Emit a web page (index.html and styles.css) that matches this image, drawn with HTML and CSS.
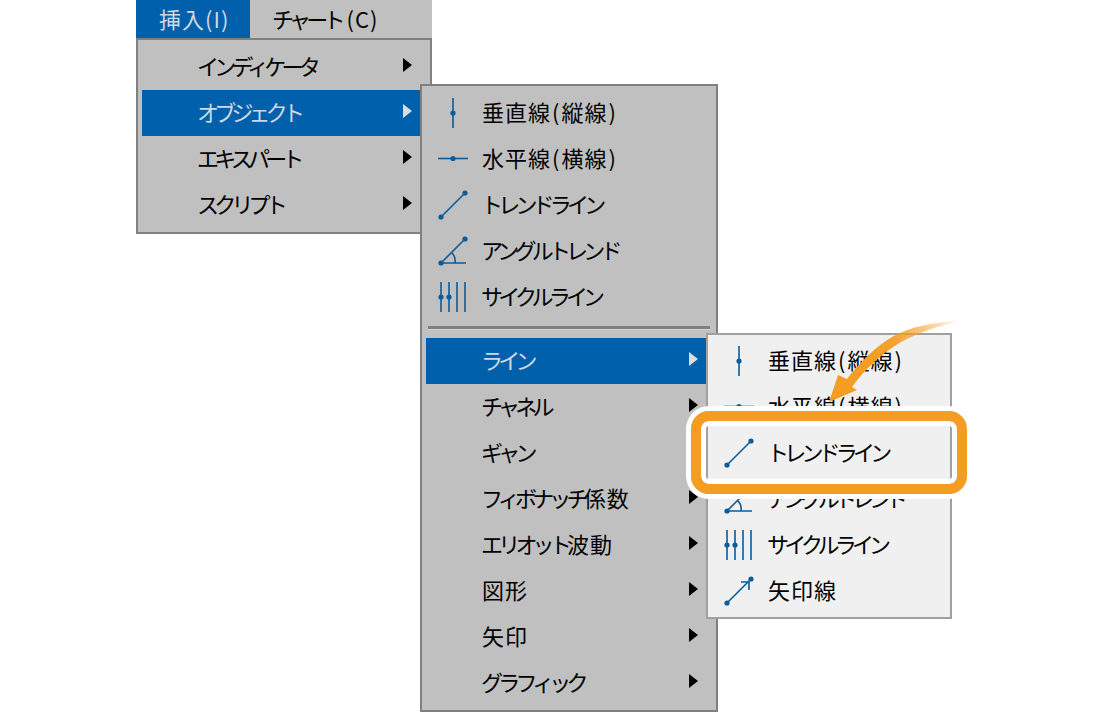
FILE: index.html
```html
<!DOCTYPE html>
<html lang="ja">
<head>
  <meta charset="UTF-8">
  <title>挿入メニュー</title>
  <link rel="stylesheet" href="styles.css">
</head>
<body>

  <!-- アイコン定義 -->
  <svg class="sprite" aria-hidden="true">
    <symbol id="i-vline" viewBox="0 0 30 30">
      <path d="M15 0V30" fill="none" stroke="currentColor" stroke-width="1.6"/>
      <circle cx="15" cy="15" r="2.6" fill="currentColor"/>
    </symbol>
    <symbol id="i-hline" viewBox="0 0 30 30">
      <path d="M0 14.5H30" fill="none" stroke="currentColor" stroke-width="1.6"/>
      <circle cx="15" cy="14.5" r="2.6" fill="currentColor"/>
    </symbol>
    <symbol id="i-trend" viewBox="0 0 30 30">
      <path d="M3 27L27 3" fill="none" stroke="currentColor" stroke-width="1.6"/>
      <circle cx="3" cy="27" r="2.6" fill="currentColor"/>
      <circle cx="27" cy="3" r="2.6" fill="currentColor"/>
    </symbol>
    <symbol id="i-angle" viewBox="0 0 30 30">
      <path d="M3 27L27 3M3 27H28M14 17Q18 21 17 27" fill="none" stroke="currentColor" stroke-width="1.6"/>
      <circle cx="3" cy="27" r="2.6" fill="currentColor"/>
      <circle cx="27" cy="3" r="2.6" fill="currentColor"/>
    </symbol>
    <symbol id="i-cycle" viewBox="0 0 30 30">
      <path d="M3 0V30M11 0V30M19 0V30M27 0V30" fill="none" stroke="currentColor" stroke-width="1.6"/>
      <circle cx="3" cy="15" r="2.6" fill="currentColor"/>
      <circle cx="11" cy="15" r="2.6" fill="currentColor"/>
    </symbol>
    <symbol id="i-arrow" viewBox="0 0 30 30">
      <path d="M3 27L27 3M17 6H25V14" fill="none" stroke="currentColor" stroke-width="1.6"/>
      <circle cx="3" cy="27" r="2.6" fill="currentColor"/>
      <circle cx="27" cy="3" r="2.6" fill="currentColor"/>
    </symbol>
  </svg>

  <!-- メニューバー -->
  <div class="menubar">
    <div class="menubar-item active"><span class="label">挿入<span class="paren">(</span>I<span class="paren">)</span></span></div>
    <div class="menubar-item"><span class="label"><span class="kana">チャート</span> <span class="paren">(</span>C<span class="paren">)</span></span></div>
  </div>

  <ul class="menu menu-root">
    <li><div class="row sub"><span class="icon"></span><span class="label"><span class="kana">インディケータ</span></span></div></li>
    <li>
      <div class="row sub on"><span class="icon"></span><span class="label"><span class="kana">オブジェクト</span></span></div>

      <!-- オブジェクト サブメニュー -->
      <ul class="menu menu-objects">
        <li><div class="row"><svg class="icon"><use href="#i-vline"/></svg><span class="label">垂直線<span class="paren">(</span>縦線<span class="paren">)</span></span></div></li>
        <li><div class="row"><svg class="icon"><use href="#i-hline"/></svg><span class="label">水平線<span class="paren">(</span>横線<span class="paren">)</span></span></div></li>
        <li><div class="row"><svg class="icon"><use href="#i-trend"/></svg><span class="label"><span class="kana">トレンドライン</span></span></div></li>
        <li><div class="row"><svg class="icon"><use href="#i-angle"/></svg><span class="label"><span class="kana">アングルトレンド</span></span></div></li>
        <li><div class="row"><svg class="icon"><use href="#i-cycle"/></svg><span class="label"><span class="kana">サイクルライン</span></span></div></li>
        <li class="separator"></li>
        <li>
          <div class="row sub on"><span class="icon"></span><span class="label"><span class="kana">ライン</span></span></div>

          <!-- ライン サブメニュー -->
          <ul class="menu menu-lines">
            <li><div class="row"><svg class="icon"><use href="#i-vline"/></svg><span class="label">垂直線<span class="paren">(</span>縦線<span class="paren">)</span></span></div></li>
            <li><div class="row"><svg class="icon"><use href="#i-hline"/></svg><span class="label">水平線<span class="paren">(</span>横線<span class="paren">)</span></span></div></li>
            <li><div class="row"><svg class="icon"><use href="#i-trend"/></svg><span class="label"><span class="kana">トレンドライン</span></span></div></li>
            <li><div class="row"><svg class="icon"><use href="#i-angle"/></svg><span class="label"><span class="kana">アングルトレンド</span></span></div></li>
            <li><div class="row"><svg class="icon"><use href="#i-cycle"/></svg><span class="label"><span class="kana">サイクルライン</span></span></div></li>
            <li><div class="row"><svg class="icon"><use href="#i-arrow"/></svg><span class="label">矢印線</span></div></li>
          </ul>
        </li>
        <li><div class="row sub"><span class="icon"></span><span class="label"><span class="kana">チャネル</span></span></div></li>
        <li><div class="row sub"><span class="icon"></span><span class="label"><span class="kana">ギャン</span></span></div></li>
        <li><div class="row sub"><span class="icon"></span><span class="label"><span class="kana">フィボナッチ</span>係数</span></div></li>
        <li><div class="row sub"><span class="icon"></span><span class="label"><span class="kana">エリオット</span>波動</span></div></li>
        <li><div class="row sub"><span class="icon"></span><span class="label">図形</span></div></li>
        <li><div class="row sub"><span class="icon"></span><span class="label">矢印</span></div></li>
        <li><div class="row sub"><span class="icon"></span><span class="label"><span class="kana">グラフィック</span></span></div></li>
      </ul>
    </li>
    <li><div class="row sub"><span class="icon"></span><span class="label"><span class="kana">エキスパート</span></span></div></li>
    <li><div class="row sub"><span class="icon"></span><span class="label"><span class="kana">スクリプト</span></span></div></li>
  </ul>

  <!-- 注釈: 枠と矢印 -->
  <div class="callout"></div>
  <svg class="callout-arrow" width="140" height="90" viewBox="0 0 140 90" aria-hidden="true">
    <defs>
      <linearGradient id="arrow-fade" gradientUnits="userSpaceOnUse" x1="136" y1="3" x2="40" y2="40">
        <stop offset="0" stop-color="#f59d23" stop-opacity="0"/>
        <stop offset="0.35" stop-color="#f59d23" stop-opacity="0.55"/>
        <stop offset="0.7" stop-color="#f59d23" stop-opacity="0.95"/>
        <stop offset="1" stop-color="#f59d23"/>
      </linearGradient>
    </defs>
    <path d="M136 3C108 4 84 9 67 19C50 29 35 44 22 61L13 57L4 84L32 72L27 69C38 53 57 35 76 24C93 15 112 8 136 3Z" fill="url(#arrow-fade)"/>
  </svg>

</body>
</html>
```

FILE: styles.css
```css
* {
  margin: 0;
  padding: 0;
  box-sizing: border-box;
}
body {
  position: relative;
  height: 712px;
  overflow: hidden;
  background: #fff;
  color: #000;
  font-family: "Noto Sans CJK JP", "Noto Sans", sans-serif;
  font-size: 22px;
}
ul {
  list-style: none;
}
.sprite {
  position: absolute;
  width: 0;
  height: 0;
}

/* メニューバー */
.menubar {
  display: flex;
  width: 296px;
  height: 38px;
  margin-left: 136px;
  background: #c0c0c0;
  line-height: 36px;
}
.menubar-item {
  padding: 0 0 0 24px;
  white-space: nowrap;
  letter-spacing: 0;
}
.menubar-item.active {
  width: 114px;
  background: #0060ab;
  color: #cfd8e2;
}
.menubar .paren {
  padding: 0;
}

/* メニュー共通 */
.menu {
  background: #c0c0c0;
  border: 2px solid #808080;
  padding: 4px;
}
.menu-root {
  width: 296px;
  margin-left: 136px;
}
.menu-objects {
  position: absolute;
  left: 278px;
  top: -6px;
  width: 298px;
  z-index: 2;
}
.menu-lines {
  position: absolute;
  left: 280px;
  top: -5px;
  width: 246px;
  padding: 3px 4px;
  background: #f0f0f0;
  border-color: #a0a0a0;
  z-index: 3;
}
.menu li {
  position: relative;
}
.row {
  display: flex;
  align-items: center;
  height: 46px;
  padding-left: 12px;
  gap: 15px;
  white-space: nowrap;
}
.row .label {
  margin-bottom: 4px;
}
.row.on {
  background: #0060ab;
  color: #cfd8e2;
}
.icon {
  flex: none;
  width: 30px;
  height: 30px;
  color: #0a5c9c;
}
/* サブメニューありの三角 */
.row.sub::after {
  content: "";
  position: absolute;
  right: 14px;
  top: 14px;
  border-left: 9px solid #000;
  border-top: 7px solid transparent;
  border-bottom: 7px solid transparent;
}
.row.sub.on::after {
  border-left-color: #d8dde2;
}
.label {
  letter-spacing: 1px;
  margin-left: -1px;
}
.kana {
  letter-spacing: -4.8px;
  margin-left: -1px;
}
.paren {
  padding: 0 1px;
}
.separator {
  height: 18px;
  margin: 0 2px;
}
.separator::before {
  content: "";
  display: block;
  position: relative;
  top: 6px;
  height: 3px;
  background: #808080;
  border-bottom: 1px solid #d4d4d4;
}

/* 注釈 */
.callout {
  position: absolute;
  left: 691px;
  top: 411px;
  width: 276px;
  height: 83px;
  border: 10px solid #f59d23;
  border-radius: 18px;
  box-shadow: 0 0 0 5px #fff, inset 0 0 0 5px #fff;
  z-index: 5;
}
.callout-arrow {
  position: absolute;
  left: 825px;
  top: 318px;
  z-index: 5;
}
```
